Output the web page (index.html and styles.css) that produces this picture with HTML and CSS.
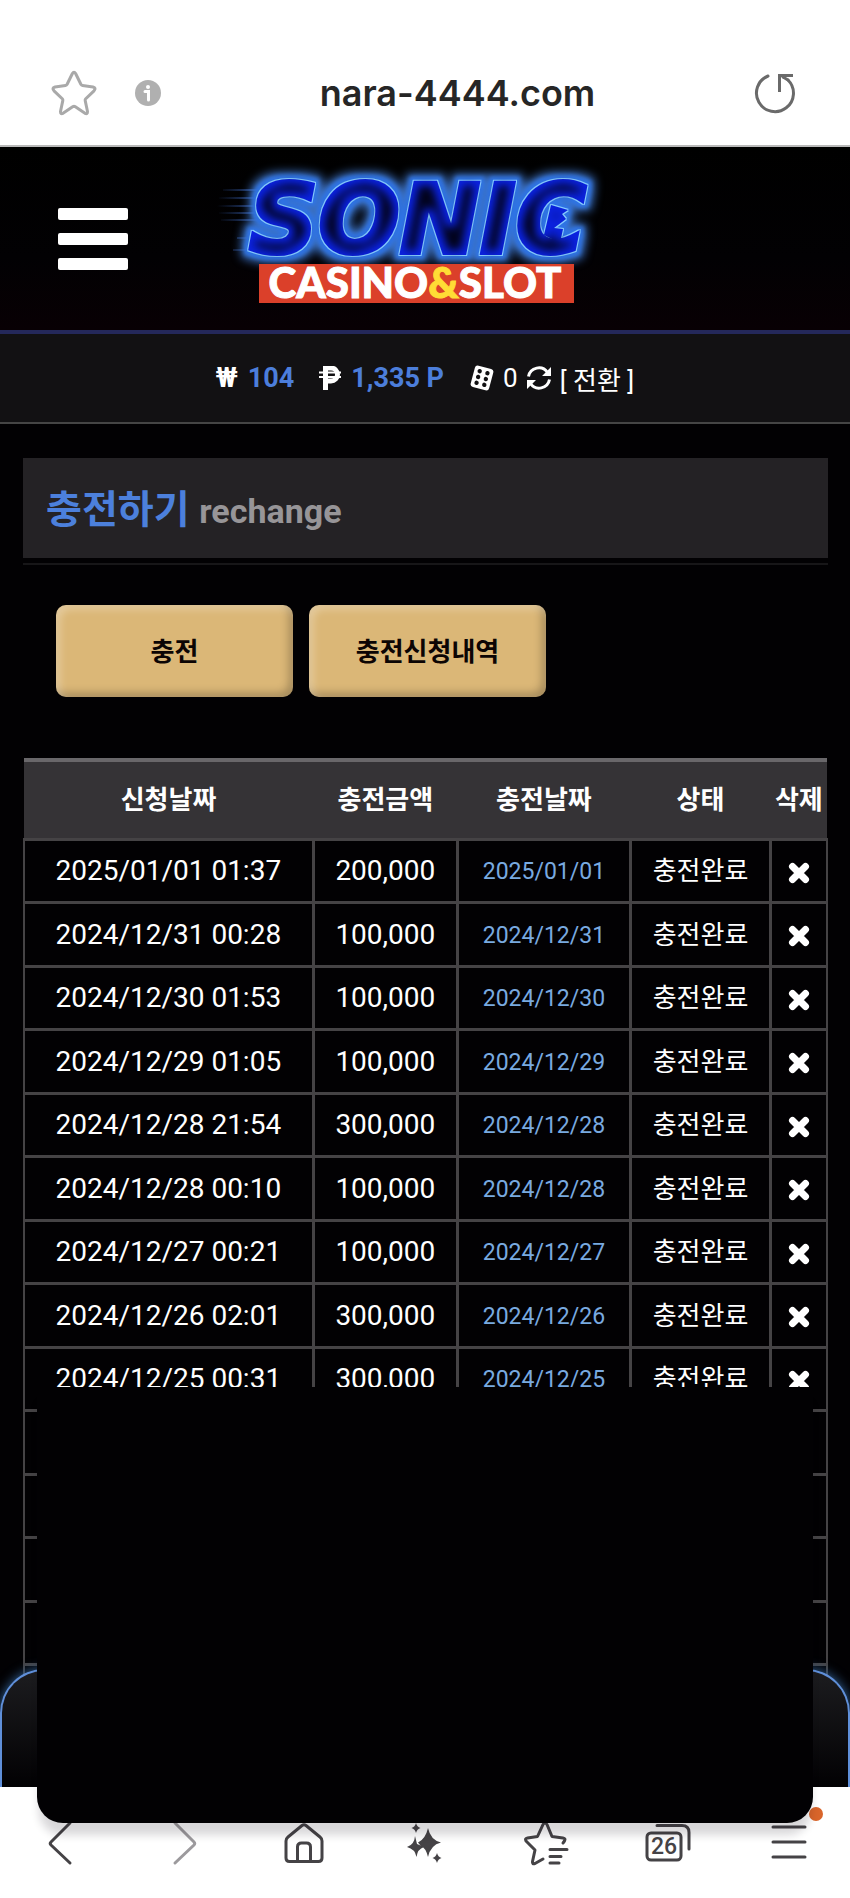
FILE: index.html
```html
<!DOCTYPE html>
<html lang="ko">
<head>
  <meta charset="UTF-8" />
  <meta name="viewport" content="width=device-width, initial-scale=1.0"/>
  <title>nara-4444.com</title>
  <link rel="stylesheet" href="styles.css">
</head>
<body>
  <div class="address-bar">
    <button class="icon-btn" aria-label="Bookmark">
      <svg width="46" height="46" viewBox="0 0 46 46" fill="none" stroke="#a9a9a9" stroke-width="3" stroke-linejoin="round"><path d="M21.4 3.5Q23 .8 24.6 3.5L30 14.5Q30.400 15.400 31.500 15.500L42 17Q45.500 18 43 20.800L34.500 29Q34 29.700 34.200 30.600L36.500 41.500Q36.600 44.500 34 43.300L24 36.600Q23 36 22 36.600L12 43.300Q9.400 44.500 9.500 41.500L11.800 30.600Q12 29.700 11.500 29L3 20.800Q.5 18 4 17L14.500 15.500Q15.600 15.400 16 14.500Z"/></svg>
    </button>
    <svg class="info-icon" width="26" height="26" viewBox="0 0 26 26"><circle cx="13" cy="13" r="13" fill="#b0b0b0"/><circle cx="13" cy="7" r="2" fill="#fff"/><path d="M10 11.500h3.500V20" fill="none" stroke="#fff" stroke-width="3" stroke-linecap="round"/></svg>
    <span class="url">nara-4444.com</span>
    <button class="icon-btn" aria-label="Reload">
      <svg width="42" height="42" viewBox="0 0 42 42" fill="none" stroke="#6a6a6a" stroke-width="3" stroke-linecap="round"><path d="M14 4A18.500 18.500 0 1 0 34 8"/><path d="M39 3.500H25.500V20" stroke-linecap="butt"/><path d="M29 5l5 3"/></svg>
    </button>
  </div>

  <main class="site">
    <header class="site-header">
      <button class="menu-btn" aria-label="Menu"><span></span><span></span><span></span></button>
      <a href="#" class="logo" aria-label="Sonic Casino &amp; Slot">
        <svg width="420" height="160" viewBox="0 0 420 160">
          <defs>
            <!-- neon letters: outer glow, blue halo, thin light rim, dark core -->
            <filter id="neon" x="-10%" y="-20%" width="120%" height="140%" color-interpolation-filters="sRGB">
              <feMorphology in="SourceAlpha" operator="dilate" radius="7" result="wide"/>
              <feGaussianBlur in="wide" stdDeviation="5" result="wideBlur"/>
              <feFlood flood-color="#3a6fc0"/>
              <feComposite in2="wideBlur" operator="in" result="glow"/>
              <feMorphology in="SourceAlpha" operator="dilate" radius="4" result="near"/>
              <feGaussianBlur in="near" stdDeviation="2" result="nearBlur"/>
              <feFlood flood-color="#2f74e6"/>
              <feComposite in2="nearBlur" operator="in" result="halo"/>
              <feMorphology in="SourceAlpha" operator="dilate" radius="1" result="edge"/>
              <feFlood flood-color="#86ccff"/>
              <feComposite in2="edge" operator="in" result="rim"/>
              <feMorphology in="SourceAlpha" operator="erode" radius="5" result="thin"/>
              <feGaussianBlur in="thin" stdDeviation="4" result="thinBlur"/>
              <feFlood flood-color="#02031c"/>
              <feComposite in2="thinBlur" operator="in" result="core"/>
              <feMerge>
                <feMergeNode in="glow"/><feMergeNode in="halo"/><feMergeNode in="rim"/><feMergeNode in="SourceGraphic"/><feMergeNode in="core"/>
              </feMerge>
            </filter>
            <linearGradient id="speed" gradientUnits="userSpaceOnUse" x1="10" y1="0" x2="70" y2="0"><stop offset="0" stop-color="#3158a8" stop-opacity="0"/><stop offset="1" stop-color="#4a7cdf"/></linearGradient>
          </defs>
          <path d="M16 31h60M12 39h60M10 47h60M12 54h50M14 61h50M30 79h30M26 91h30" stroke="url(#speed)" stroke-width="2"/>
          <g filter="url(#neon)">
            <text class="logo-word" x="42" y="94">SONIC</text>
            <path d="M344 46l17 5-6 4 4 5-12 9 9 1-3 14-16-8z" fill="#0b22e0"/>
          </g>
          <rect x="52" y="105" width="315" height="39" fill="#db402a"/>
          <text class="logo-sub" x="208" y="139" text-anchor="middle">CASINO<tspan fill="#ffdc35" stroke="#ffdc35">&amp;</tspan>SLOT</text>
        </svg>
      </a>
    </header>

    <div class="wallet">
      <span class="money"><span class="sign">₩</span> 104</span>
      <span class="money"><svg width="22" height="24" viewBox="0 0 22 24" fill="none" stroke="#fff"><path d="M6.500 24V2H12a6.500 6.500 0 0 1 0 13H7" stroke-width="5"/><path d="M0 6.500h22M0 11h22" stroke-width="2"/></svg> 1,335 P</span>
      <span class="casino">
        <svg width="26" height="26" viewBox="0 0 26 26"><g transform="rotate(15 13 13)"><rect x="3.500" y="2" width="19" height="22" rx="3" fill="#fff"/><g fill="#121113"><circle cx="9" cy="7" r="2.200"/><circle cx="17" cy="7" r="2.200"/><circle cx="9" cy="13" r="2.200"/><circle cx="17" cy="13" r="2.200"/><circle cx="9" cy="19" r="2.200"/><circle cx="17" cy="19" r="2.200"/></g></g></svg>
        <span>0</span>
        <svg width="26" height="26" viewBox="0 0 26 26" fill="none" stroke="#fff" stroke-width="3"><path d="M2.500 11.500A10.500 10.500 0 0 1 21.500 7.500M23.500 14.500A10.500 10.500 0 0 1 4.500 18.500"/><path d="M25 2v9h-9zM1 24v-9h9z" fill="#fff" stroke="none"/></svg>
        <a href="#">[ 전환 ]</a>
      </span>
    </div>

    <section class="content">
      <h1 class="title">충전하기 <small>rechange</small></h1>
      <div class="tabs">
        <button>충전</button>
        <button>충전신청내역</button>
      </div>

      <table class="history">
        <colgroup>
          <col class="col-request"><col class="col-amount"><col class="col-charged"><col class="col-state"><col>
        </colgroup>
        <thead>
          <tr><th>신청날짜</th><th>충전금액</th><th>충전날짜</th><th>상태</th><th>삭제</th></tr>
        </thead>
        <tbody id="rows"></tbody>
      </table>
    </section>

    <div class="dock"></div>
  </main>

  <nav class="browser-nav">
    <button aria-label="Back"><svg width="48" height="48" viewBox="0 0 48 48"><path d="M33 4L14 23q-1.500 1.500 0 3L33 44"/></svg></button>
    <button aria-label="Forward" class="dim"><svg width="48" height="48" viewBox="0 0 48 48"><path d="M17 4l19 19q1.500 1.500 0 3L17 44"/></svg></button>
    <button aria-label="Home"><svg width="48" height="48" viewBox="0 0 48 48"><path d="M22 6.500q2-1.500 4 0L40 18q2 1.600 2 4v17q0 3.500-3.500 3.500h-29Q6 42.500 6 39V22q0-2.400 2-4zM17.500 42V28q0-4 4-4h5q4 0 4 4v14"/></svg></button>
    <button aria-label="AI"><svg width="48" height="48" viewBox="0 0 48 48" class="solid"><path d="M27 9q2.500 12 13 14.500Q29.500 26 27 38q-2-9-8-12l-2-2.500Q24.500 20 27 9zM14 17l2 8 7 3q-6.500 2-7.500 10Q14 30 6 28q7.500-2.500 8-11zM15 4q1 4 4.500 5-3.500 1-4.500 5-1-4-4.500-5 3.500-1 4.500-5zM36 34q1 4 4.500 5-3.500 1-4.500 5-1-4-4.500-5 3.500-1 4.500-5z"/></svg></button>
    <button aria-label="Bookmarks"><svg width="48" height="48" viewBox="0 0 48 48"><path d="M21 40l-8 4.500q-3 1-2.500-2L13 31 4 22q-1.500-2.500 1.500-3l10-1.500L21 5.500q2-3 4 0l5 12 11 1.500q3 .5 1.500 3L41 24M28 30.500h17M28 37.500h11M28 44h9"/></svg></button>
    <button aria-label="Tabs"><svg width="48" height="48" viewBox="0 0 48 48"><rect x="3" y="14" width="34" height="27" rx="4"/><path d="M13 6.500h25q7 0 7 7V30"/><text x="20" y="35" text-anchor="middle">26</text></svg></button>
    <button aria-label="More"><svg width="48" height="48" viewBox="0 0 48 48"><path d="M8 8h32M8 23h32M8 38h32"/></svg><i class="dot"></i></button>
  </nav>

  <div class="sheet"></div>

  <script>
    const history = [
      ['2025/01/01', '01:37', '200,000'],
      ['2024/12/31', '00:28', '100,000'],
      ['2024/12/30', '01:53', '100,000'],
      ['2024/12/29', '01:05', '100,000'],
      ['2024/12/28', '21:54', '300,000'],
      ['2024/12/28', '00:10', '100,000'],
      ['2024/12/27', '00:21', '100,000'],
      ['2024/12/26', '02:01', '300,000'],
      ['2024/12/25', '00:31', '300,000']
    ];
    const pageSize = 15;
    const closeIcon = '<svg width="22" height="22" viewBox="0 0 22 22"><path d="M4.500 4.500l13 13M17.500 4.500l-13 13" stroke="#fff" stroke-width="7" stroke-linecap="round"/></svg>';
    const rows = document.getElementById('rows');

    for (let i = 0; i < pageSize; i++) {
      const tr = document.createElement('tr');
      const item = history[i];
      if (item) {
        tr.innerHTML = `
          <td>${item[0]} ${item[1]}</td>
          <td>${item[2]}</td>
          <td class="charged">${item[0]}</td>
          <td class="state">충전완료</td>
          <td><button class="delete" aria-label="삭제">${closeIcon}</button></td>
        `;
      } else {
        tr.innerHTML = '<td></td><td></td><td></td><td></td><td></td>';
      }
      rows.appendChild(tr);
    }
  </script>
</body>
</html>
```
FILE: styles.css
```css
* { box-sizing: border-box; }

body {
  margin: 0;
  height: 100vh;
  display: flex;
  flex-direction: column;
  position: relative;
  overflow: hidden;
  background: #fff;
  font-family: Roboto, "Noto Sans CJK KR", sans-serif;
}

button {
  border: none;
  background: none;
  padding: 0;
  font-family: inherit;
  cursor: pointer;
}

a { color: inherit; text-decoration: none; }
svg { display: block; }

/* browser top bar */
.address-bar {
  display: flex;
  align-items: center;
  padding: 40px 54px 0 51px;
  height: 147px;
  flex-shrink: 0;
  border-bottom: 2px solid #b9b9b9;
}

.info-icon { margin-left: 38px; }

.url {
  flex: 1;
  text-align: center;
  font-family: Inter, sans-serif;
  font-size: 36px;
  font-weight: 600;
  color: #262626;
}

/* site */
.site {
  flex: 1;
  min-height: 0;
  position: relative;
  overflow: hidden;
  background: #020103;
  color: #fff;
}

.site-header {
  display: grid;
  grid-template-columns: 1fr auto 1fr;
  align-items: center;
  height: 187px;
  padding: 0 74px 0 58px;
  background: linear-gradient(#000, #020103 60%, #080004);
  border-bottom: 4px solid #24285a;
}

.menu-btn {
  display: grid;
  gap: 13px;
  width: 70px;
}

.menu-btn span {
  height: 12px;
  border-radius: 2px;
  background: #fff;
}

.logo-word {
  font-family: "DejaVu Sans", sans-serif;
  font-size: 96px;
  font-weight: bold;
  font-style: italic;
  fill: #0b22e0;
  stroke: #0b22e0;
  stroke-width: 4;
}

.logo-sub {
  font-family: Lato, sans-serif;
  font-size: 42px;
  font-weight: 900;
  fill: #fff;
  stroke: #fff;
  stroke-width: 1;
}

.wallet {
  display: flex;
  justify-content: center;
  align-items: center;
  gap: 25px;
  height: 90px;
  background: #121113;
  border-bottom: 2px solid #454545;
  font-size: 26px;
}

.money {
  display: flex;
  align-items: center;
  gap: 10px;
  font-size: 27px;
  font-weight: bold;
  color: #4c7edb;
}

.sign { color: #fff; }

.casino {
  display: flex;
  align-items: center;
  gap: 8px;
}

.content { padding: 34px 22px 0 23px; }

.title {
  margin: 0;
  height: 100px;
  padding: 0 23px;
  line-height: 104px;
  font-size: 39px;
  color: #4c80dc;
  background: #242225;
  box-shadow: 0 5px 0 #020103, 0 7px 0 #171618;
}

.title small {
  font-size: 34px;
  color: #979598;
}

.tabs {
  display: flex;
  gap: 16px;
  padding: 47px 33px 61px;
}

.tabs button {
  width: 237px;
  height: 92px;
  padding-bottom: 4px;
  border-radius: 10px;
  background: #dbb777;
  box-shadow: inset 4px 4px 8px rgba(255, 255, 255, .3), inset -4px -4px 8px rgba(0, 0, 0, .25);
  font-size: 26px;
  font-weight: bold;
  color: #0c0504;
}

.history {
  width: 100%;
  table-layout: fixed;
  border-collapse: collapse;
  text-align: center;
  font-size: 28px;
}

.col-request { width: 36%; }
.col-amount { width: 18%; }
.col-charged { width: 21.5%; }
.col-state { width: 17.5%; }

.history th {
  height: 79px;
  padding: 0 0 4px;
  background: #353336;
  border-top: 4px solid #69676a;
  font-size: 26px;
}

.history td {
  height: 63px;
  padding: 0;
  border: 3px solid #454345;
}

.history tr:nth-child(even) td { height: 64px; }
.history td:first-child { border-left-width: 2px; }
.history td:last-child { border-right-width: 2px; }

.history .charged {
  padding-top: 2px;
  font-size: 23px;
  color: #79aae0;
}

.history .state {
  padding-bottom: 4px;
  font-size: 26px;
}

.delete { vertical-align: middle; }

.dock {
  position: absolute;
  left: 0;
  right: 0;
  bottom: 0;
  height: 118px;
  border: 2px solid #5f8fd9;
  border-bottom: none;
  border-radius: 44px 44px 0 0;
  background: linear-gradient(#1c1c1f, #020103);
  box-shadow: 0 0 12px #34679c;
}

/* black sheet on top of the list */
.sheet {
  position: absolute;
  left: 37px;
  right: 37px;
  bottom: 75px;
  height: 436px;
  border-radius: 0 0 26px 26px;
  background: #020103;
  box-shadow: 0 14px 8px -2px rgba(20, 10, 25, .16);
}

/* browser bottom bar */
.browser-nav {
  display: grid;
  grid-template-columns: repeat(7, 1fr);
  place-items: center;
  height: 111px;
  flex-shrink: 0;
  background: #fff;
}

.browser-nav button { position: relative; }

.browser-nav svg {
  fill: none;
  stroke: #454346;
  stroke-width: 3;
  stroke-linecap: round;
  stroke-linejoin: round;
}

.browser-nav .dim svg { stroke: #9c9a9d; }
.browser-nav .solid { fill: #454346; stroke: none; }

.browser-nav text {
  fill: #454346;
  stroke: none;
  font-size: 23px;
  font-weight: 500;
}

.dot {
  position: absolute;
  top: -12px;
  right: -10px;
  width: 14px;
  height: 14px;
  border-radius: 50%;
  background: #d9652b;
}
```
